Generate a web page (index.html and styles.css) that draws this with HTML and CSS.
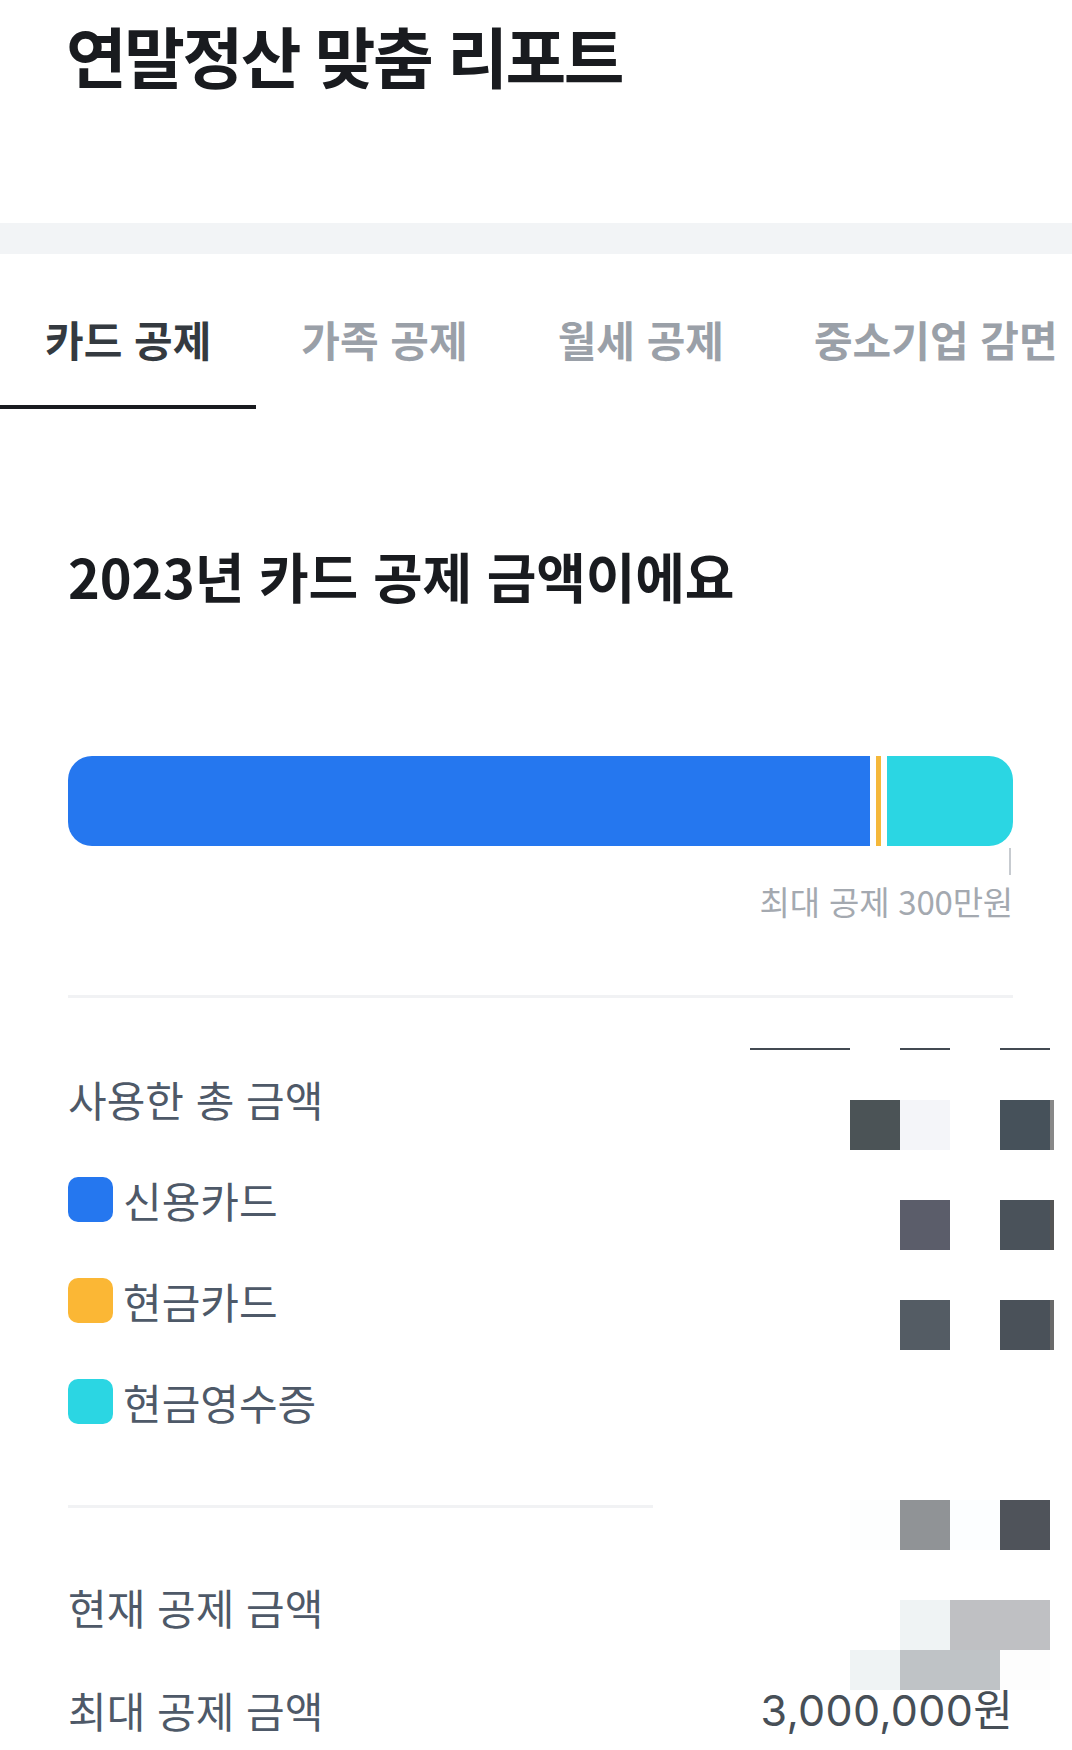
FILE: index.html
```html
<!DOCTYPE html>
<html lang="ko">
<head>
<meta charset="utf-8">
<title>연말정산 맞춤 리포트</title>
<link rel="stylesheet" href="styles.css">
</head>
<body>
<div class="page">
  <header class="header">
    <h1 class="title">연말정산 맞춤 리포트</h1>
  </header>
  <div class="band-gray"></div>
  <nav class="tabs">
    <div class="tab active">카드 공제</div>
    <div class="tab">가족 공제</div>
    <div class="tab">월세 공제</div>
    <div class="tab">중소기업 감면</div>
  </nav>

  <section class="content">
    <h2 class="heading">2023년 카드 공제 금액이에요</h2>

    <div class="bar">
      <div class="seg seg-blue" style="width: 802px"></div>
      <div class="seg seg-orange" style="width: 5px"></div>
      <div class="seg seg-cyan"></div>
    </div>
    <div class="limit">
      <div class="limit-mark"></div>
      <div class="limit-text">최대 공제 300만원</div>
    </div>

    <hr class="divider">

    <ul class="rows">
      <li class="row"><span class="label">사용한 총 금액</span></li>
      <li class="row"><span class="dot dot-blue"></span><span class="label">신용카드</span></li>
      <li class="row"><span class="dot dot-orange"></span><span class="label">현금카드</span></li>
      <li class="row"><span class="dot dot-cyan"></span><span class="label">현금영수증</span></li>
    </ul>

    <hr class="divider short">

    <ul class="rows rows-total">
      <li class="row tall"><span class="label">현재 공제 금액</span></li>
      <li class="row tall"><span class="label">최대 공제 금액</span><span class="value">3,000,000원</span></li>
    </ul>
  </section>

  <div class="mosaic" aria-hidden="true">
    <div class="mband thin">
      <span class="px w100 c-line"></span><span class="px"></span><span class="px c-line"></span><span class="px"></span><span class="px c-line"></span>
    </div>
    <div class="mgap"></div>
    <div class="mband">
      <span class="px w100"></span><span class="px c-a1"></span><span class="px c-a2"></span><span class="px"></span><span class="px c-a3"></span><span class="px edge c-a4"></span>
    </div>
    <div class="mgap"></div>
    <div class="mband">
      <span class="px w150"></span><span class="px c-b1"></span><span class="px"></span><span class="px c-b2"></span><span class="px edge c-b3"></span>
    </div>
    <div class="mgap"></div>
    <div class="mband">
      <span class="px w150"></span><span class="px c-c1"></span><span class="px"></span><span class="px c-c2"></span><span class="px edge c-c3"></span>
    </div>
    <div class="mgap big"></div>
    <div class="mband">
      <span class="px w100"></span><span class="px c-d1"></span><span class="px c-d2"></span><span class="px c-d3"></span><span class="px c-d4"></span>
    </div>
    <div class="mgap"></div>
    <div class="mband">
      <span class="px w150"></span><span class="px c-e1"></span><span class="px w100 c-e2"></span>
    </div>
    <div class="mband short">
      <span class="px w100"></span><span class="px c-f1"></span><span class="px w100 c-f2"></span><span class="px c-f3"></span>
    </div>
  </div>
</div>
</body>
</html>
```

FILE: styles.css
```css
* { box-sizing: border-box; }

html, body {
  margin: 0;
  padding: 0;
  background: #ffffff;
}

body {
  font-family: "Noto Sans CJK KR", "Noto Sans", sans-serif;
  color: #191f28;
  overflow: hidden;
}

.page {
  position: relative;
  width: 1072px;
  min-height: 1750px;
  overflow: hidden;
}

/* header */
.header {
  padding: 11px 0 126px 66px;
}

.title {
  margin: 0;
  font-size: 66px;
  line-height: 86px;
  font-weight: 700;
  color: #191b1f;
  letter-spacing: -2.5px;
}

.band-gray {
  height: 31px;
  background: #f2f4f6;
}

/* tabs */
.tabs {
  display: flex;
  white-space: nowrap;
  overflow: hidden;
}

.tab {
  flex: none;
  padding: 61px 45px 42px;
  font-size: 42px;
  line-height: 48px;
  font-weight: 700;
  color: #9aa0a8;
  border-bottom: 4px solid transparent;
}

.tab.active {
  color: #343a40;
  border-bottom-color: #191b1f;
}

/* content */
.content {
  padding: 0 59px 0 68px;
}

.heading {
  margin: 133px 0 0;
  font-size: 54px;
  line-height: 68px;
  font-weight: 700;
  color: #191b1f;
  letter-spacing: -0.2px;
}

.bar {
  margin-top: 146px;
  height: 90px;
  display: flex;
  gap: 6px;
  border-radius: 24px;
  overflow: hidden;
}

.seg { height: 100%; flex: none; }
.seg-blue { background: #2577ef; }
.seg-orange { background: #f5b83a; }
.seg-cyan { background: #2bd6e3; flex: 1; }

.limit {
  display: flex;
  flex-direction: column;
  align-items: flex-end;
}

.limit-mark {
  width: 2px;
  height: 27px;
  margin: 2px 2px 0 0;
  background: #c7cbd0;
}

.limit-text {
  margin-top: 5px;
  font-size: 33px;
  line-height: 42px;
  color: #a4a9b0;
  letter-spacing: -0.2px;
}

.divider {
  margin: 73px 0 0;
  border: 0;
  height: 3px;
  background: #f1f2f4;
}

.divider.short {
  width: 585px;
  margin-top: 53px;
}

.rows {
  list-style: none;
  margin: 50px 0 0;
  padding: 0;
}

.rows-total {
  margin-top: 47px;
}

.row {
  height: 101px;
  display: flex;
  align-items: center;
  gap: 10px;
}

.row.tall {
  height: 103px;
}

.label {
  font-size: 42px;
  line-height: 48px;
  color: #4e5968;
}

.dot {
  width: 45px;
  height: 45px;
  border-radius: 10px;
  flex: none;
}

.dot-blue { background: #2577ef; }
.dot-orange { background: #fbb735; }
.dot-cyan { background: #2bd6e3; }

.value {
  margin-left: auto;
  font-family: "Inter", "Noto Sans CJK KR", sans-serif;
  font-size: 43px;
  line-height: 48px;
  color: #474f57;
  letter-spacing: 0.3px;
}

/* censor mosaic overlay */
.mosaic {
  position: absolute;
  left: 750px;
  top: 1048px;
  width: 304px;
  display: flex;
  flex-direction: column;
}

.mband {
  display: flex;
  height: 50px;
}

.mband.thin { height: 2px; }
.mband.short { height: 40px; }

.mgap { height: 50px; }
.mgap.big { height: 150px; }

.px {
  flex: none;
  width: 50px;
  height: 100%;
}

.px.w100 { width: 100px; }
.px.w150 { width: 150px; }
.px.edge { width: 4px; }

.c-line { background: #434a52; }
.c-a1 { background: #4b5356; }
.c-a2 { background: #f4f5f9; }
.c-a3 { background: #46515a; }
.c-a4 { background: #888888; }
.c-b1 { background: #5b5d6a; }
.c-b2 { background: #4a525a; }
.c-b3 { background: #555555; }
.c-c1 { background: #545c64; }
.c-c2 { background: #4a5159; }
.c-c3 { background: #6a6a6a; }
.c-d1 { background: #fdfefe; }
.c-d2 { background: #909396; }
.c-d3 { background: #fcfeff; }
.c-d4 { background: #4f535a; }
.c-e1 { background: #eff3f4; }
.c-e2 { background: #bfc0c3; }
.c-f1 { background: #eff3f4; }
.c-f2 { background: #bfc3c6; }
.c-f3 { background: #fdfdfd; }
```
